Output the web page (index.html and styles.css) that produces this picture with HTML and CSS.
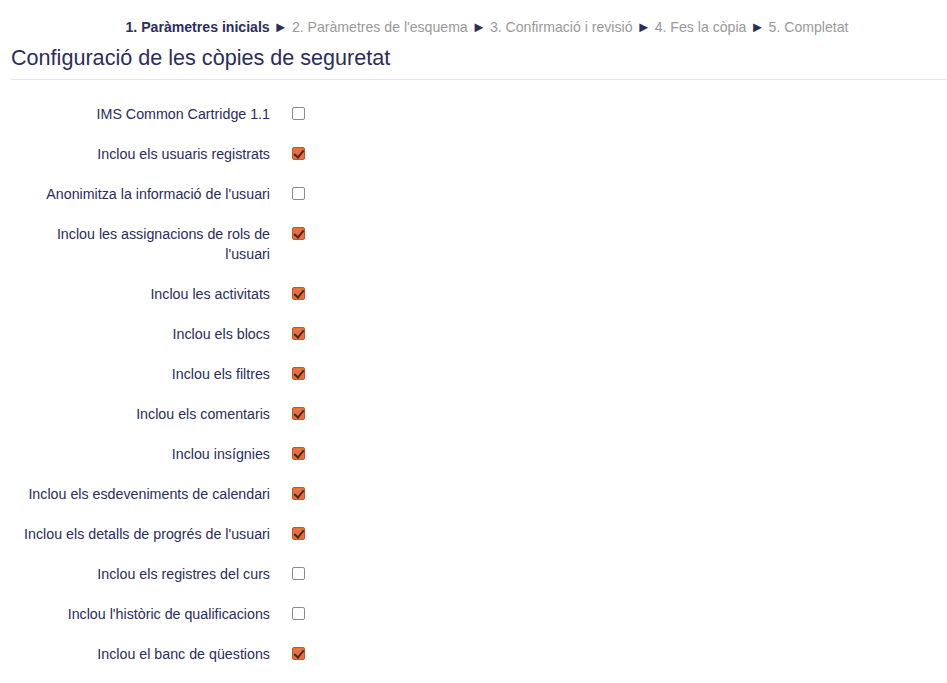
FILE: index.html
```html
<!DOCTYPE html>
<html lang="ca">
<head>
<meta charset="utf-8">
<link rel="stylesheet" href="styles.css">
</head>
<body>
<div class="page">
  <nav class="steps">
    <span class="step current">1. Paràmetres inicials</span>
    <span class="arrow">►</span>
    <span class="step">2. Paràmetres de l'esquema</span>
    <span class="arrow">►</span>
    <span class="step">3. Confirmació i revisió</span>
    <span class="arrow">►</span>
    <span class="step">4. Fes la còpia</span>
    <span class="arrow">►</span>
    <span class="step">5. Completat</span>
  </nav>
  <h2 class="title">Configuració de les còpies de seguretat</h2>
  <form class="form">
    <div class="row"><label class="label">IMS Common Cartridge 1.1</label><span class="box"></span></div>
    <div class="row"><label class="label">Inclou els usuaris registrats</label><span class="box checked"></span></div>
    <div class="row"><label class="label">Anonimitza la informació de l'usuari</label><span class="box"></span></div>
    <div class="row"><label class="label">Inclou les assignacions de rols de l'usuari</label><span class="box checked"></span></div>
    <div class="row"><label class="label">Inclou les activitats</label><span class="box checked"></span></div>
    <div class="row"><label class="label">Inclou els blocs</label><span class="box checked"></span></div>
    <div class="row"><label class="label">Inclou els filtres</label><span class="box checked"></span></div>
    <div class="row"><label class="label">Inclou els comentaris</label><span class="box checked"></span></div>
    <div class="row"><label class="label">Inclou insígnies</label><span class="box checked"></span></div>
    <div class="row"><label class="label">Inclou els esdeveniments de calendari</label><span class="box checked"></span></div>
    <div class="row"><label class="label">Inclou els detalls de progrés de l'usuari</label><span class="box checked"></span></div>
    <div class="row"><label class="label">Inclou els registres del curs</label><span class="box"></span></div>
    <div class="row"><label class="label">Inclou l'històric de qualificacions</label><span class="box"></span></div>
    <div class="row"><label class="label">Inclou el banc de qüestions</label><span class="box checked"></span></div>
  </form>
</div>
</body>
</html>
```
FILE: styles.css
```css
html, body {
  margin: 0;
  padding: 0;
  background: #fff;
}
body {
  font-family: "Liberation Sans", Arial, sans-serif;
  font-size: 14.25px;
  line-height: 20px;
  color: #2b2d5c;
}
.page {
  padding: 0 0 0 11px;
}
.steps {
  text-align: center;
  padding: 17px 0 0 16px;
  height: 20px;
  color: #999;
  white-space: nowrap;
  font-size: 14.1px;
}
.step.current {
  font-weight: bold;
  color: #2b2d5c;
}
.arrow {
  color: #2b2d5c;
  font-size: 14.5px;
}
.title {
  margin: 6px 0 0 0;
  font-size: 21.6px;
  font-weight: normal;
  line-height: 30px;
  padding-bottom: 6px;
  border-bottom: 1px solid #e5e5e5;
  color: #2b2d5c;
}
.form {
  padding-top: 24px;
}
.row {
  display: flex;
  align-items: flex-start;
  margin-bottom: 20px;
}
.label {
  padding-left: 9px;
  text-align: right;
  flex: none;
  box-sizing: border-box;
  width: 259px;
}
.box {
  flex: none;
  width: 11px;
  height: 11px;
  margin: 3px 0 0 22px;
  border: 1px solid #8c8c8c;
  border-radius: 2px;
  background: #fff;
  position: relative;
  box-sizing: content-box;
}
.box.checked {
  background: #e8703f;
  border-color: #c4552a;
}
.box.checked::after {
  content: "";
  position: absolute;
  left: 3px;
  top: 0px;
  width: 4px;
  height: 8px;
  border-right: 2px solid #4a2a20;
  border-bottom: 2px solid #4a2a20;
  transform: rotate(40deg);
}
```
